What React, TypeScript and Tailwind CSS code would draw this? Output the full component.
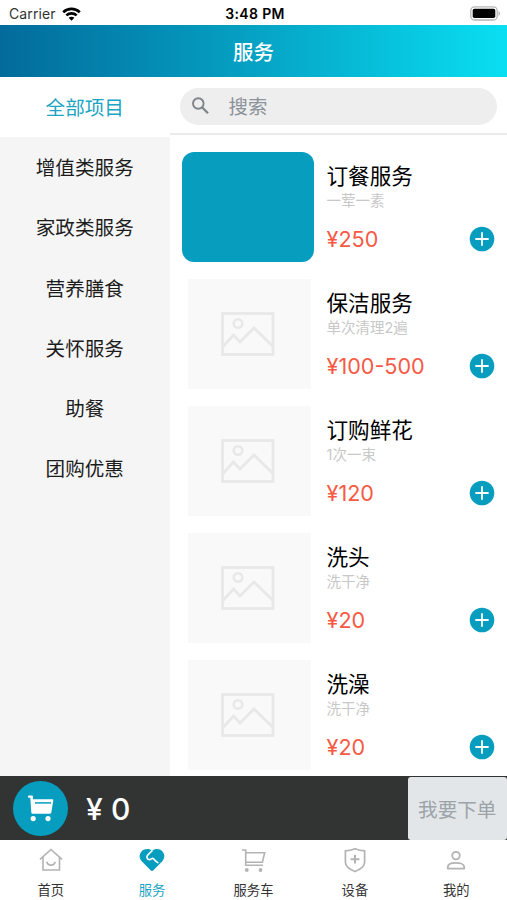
import { ReactNode } from "react";

interface IService {
  name: string;
  desc: string;
  price: string;
  cover?: boolean;
}

interface ITab {
  label: string;
  icon: ReactNode;
  active?: boolean;
}

const categories = [
  "全部项目",
  "增值类服务",
  "家政类服务",
  "营养膳食",
  "关怀服务",
  "助餐",
  "团购优惠",
];

const services: IService[] = [
  { name: "订餐服务", desc: "一荤一素", price: "250", cover: true },
  { name: "保洁服务", desc: "单次清理2遍", price: "100-500" },
  { name: "订购鲜花", desc: "1次一束", price: "120" },
  { name: "洗头", desc: "洗干净", price: "20" },
  { name: "洗澡", desc: "洗干净", price: "20" },
];

const HomeIcon = () => (
  <svg width="26" height="26" viewBox="0 0 26 26" fill="none" stroke="#b3b3b3" strokeWidth="1.6">
    <path d="M2 12.3 13 2.5l11 9.8M5 10v13h16.5V10" />
    <path d="M8.8 14.8c1 4.4 7.4 4.4 8.4 0" />
  </svg>
);

const HeartIcon = () => (
  <svg width="26" height="26" viewBox="0 0 26 26">
    <path
      d="M13.2 3.6C10.5 1.6 5.5 1.3 2.7 4.3C0 7.2 0 11.5 2.7 14.2L11.6 23.3Q13 24.6 14.4 23.3L23.3 14.2C26 11.5 26 7.2 23.3 4.3C20.5 1.3 16 1.6 13.2 3.6Z"
      fill="#069dbf"
    />
    <path
      d="M13.4 3.4 8.8 8C7.2 9.9 8 12.6 10.4 12.6C12.3 12.6 12.6 11 14 11.5C15.4 12 15.8 14.4 19.4 16"
      fill="none"
      stroke="white"
      strokeWidth="1.7"
    />
  </svg>
);

const CartIcon = () => (
  <svg width="28" height="26" viewBox="0 0 28 26" fill="none" stroke="#b3b3b3" strokeWidth="1.6">
    <path d="M3 3h3.700v15.300h17.300M6.700 5.800h19l-2.300 9.400H6.700" />
    <circle cx="7.800" cy="23" r="1.900" fill="#b3b3b3" stroke="none" />
    <circle cx="21.500" cy="23" r="1.900" fill="#b3b3b3" stroke="none" />
  </svg>
);

const ShieldIcon = () => (
  <svg width="26" height="26" viewBox="0 0 26 26" fill="none" stroke="#b3b3b3" strokeWidth="1.7">
    <path d="M13 1.7c3 1.3 6 2 9.600 2.200v11.300c0 4-4.700 7.300-9.600 9.300-4.900-2-9.600-5.300-9.600-9.300V3.900C7 3.700 10 3 13 1.700Z" />
    <path d="M13 7.800v8.800M8.600 12.200h8.800" strokeWidth="2" />
  </svg>
);

const UserIcon = () => (
  <svg width="26" height="26" viewBox="0 0 26 26" fill="none" stroke="#b3b3b3" strokeWidth="1.8">
    <circle cx="13" cy="8.600" r="3.800" />
    <path d="M4.800 21.600v-1.700c0-2.500 3.500-4 8.200-4s8.200 1.500 8.200 4v1.700Z" strokeLinejoin="round" />
  </svg>
);

const tabs: ITab[] = [
  { label: "首页", icon: <HomeIcon /> },
  { label: "服务", icon: <HeartIcon />, active: true },
  { label: "服务车", icon: <CartIcon /> },
  { label: "设备", icon: <ShieldIcon /> },
  { label: "我的", icon: <UserIcon /> },
];

function StatusBar() {
  return (
    <div className="grid h-[25px] shrink-0 grid-cols-3 items-center pt-[2px] pr-1.5 pl-[9px] text-[14px] leading-none">
      <div className="flex items-center gap-1.5 text-[#333]">
        <span className="tracking-[0.1px]">Carrier</span>
        <svg width="19" height="14" viewBox="0 0 19 14" fill="none" stroke="black" strokeWidth="2.6">
          <path d="M1.2 5.2c4.7-4.5 11.9-4.5 16.6 0" />
          <path d="M4.3 8.4c3-2.7 7.4-2.7 10.4 0" />
          <path d="M9.5 13.8 6.6 10.8c1.6-1.5 4.2-1.5 5.8 0Z" fill="black" stroke="none" />
        </svg>
      </div>
      <div className="text-center font-semibold tracking-[0.35px]">3:48 PM</div>
      <svg className="justify-self-end" width="31" height="15" viewBox="0 0 31 15">
        <rect x="0.8" y="0.8" width="26.4" height="13.2" rx="3.8" fill="white" stroke="#b5b5b5" strokeWidth="1.3" />
        <rect x="2.7" y="2.7" width="22.6" height="9.4" rx="1.8" fill="black" />
        <path d="M28.500 5v5c2-.8 2-4.200 0-5Z" fill="#b5b5b5" />
      </svg>
    </div>
  );
}

function ServiceItem({ name, desc, price, cover }: IService) {
  return (
    <div className="flex h-[127px] shrink-0 pt-2 pr-3 pl-3">
      {cover ? (
        <div className="mt-px h-[110px] w-[132.5px] shrink-0 rounded-[12px] bg-[#069dbf]" />
      ) : (
        <div className="mt-px mr-[3.5px] ml-1.5 flex h-[110px] w-[123px] shrink-0 items-center justify-center bg-[#f9f9f9] pr-0.5">
          <svg width="54" height="44" viewBox="0 0 54 44" fill="none" stroke="#e8e8e8" strokeWidth="2.8">
            <rect x="1.5" y="1.5" width="50.5" height="41" />
            <circle cx="17" cy="11.5" r="4.300" strokeWidth="2.5" />
            <path d="M2 34.500 12.500 23l6.500 7L33 16l19 18.500" />
          </svg>
        </div>
      )}
      <div className="ml-[12.5px] min-w-0 flex-1">
        <div className="mt-[11.5px] text-[21.6px] leading-[27px] text-black">{name}</div>
        <div className="text-[14.5px] leading-[22px] text-[#c8c8c8]">{desc}</div>
        <div className="mt-[14px] flex h-[27px] items-center justify-between">
          <span className="pt-0.5 text-[21.6px] leading-none text-[#f65a45]">¥{price}</span>
          <svg width="26" height="26" viewBox="0 0 26 26">
            <circle cx="13" cy="13" r="12.3" fill="#069dbf" />
            <path d="M13 7v12M7 13h12" stroke="white" strokeWidth="1.8" strokeLinecap="round" />
          </svg>
        </div>
      </div>
    </div>
  );
}

export default function App() {
  return (
    <div className="flex h-[900px] w-[507px] flex-col overflow-hidden bg-white font-[Inter,'Noto_Sans_CJK_SC',sans-serif]">
      <StatusBar />
      <header className="flex h-[52px] shrink-0 items-center justify-center bg-linear-to-r from-[#036b9b] via-[#06a2c4] to-[#0adff2] pt-[5px] text-[20.5px] font-medium text-white">
        服务
      </header>

      <main className="flex min-h-0 flex-1">
        <aside className="w-[169.5px] shrink-0 bg-[#f5f5f5]">
          {categories.map((item, index) => (
            <div
              key={item}
              className={`flex h-[60.25px] items-center justify-center pt-[3px] text-[19.6px] ${
                index === 0 ? "bg-white text-[#1ba4c4]" : "text-[#1c1c1c]"
              }`}
            >
              {item}
            </div>
          ))}
        </aside>

        <section className="flex min-w-0 flex-1 flex-col overflow-hidden">
          <div className="h-[58px] shrink-0 border-b-2 border-[#ebebeb] pt-[10.5px] pr-2.5 pl-2.5">
            <div className="flex h-[37px] items-center rounded-full bg-[#eeeeef] pl-3 text-[19.4px] text-[#8b9299]">
              <svg width="18" height="18" viewBox="0 0 18 18" fill="none" stroke="#7f858a" strokeWidth="1.9">
                <circle cx="6.300" cy="6.500" r="5.300" />
                <path d="m10.300 10.500 5.700 5.700" strokeWidth="2.3" />
              </svg>
              <span className="ml-[19px] pt-[3px]">搜索</span>
            </div>
          </div>
          <div className="flex min-h-0 flex-1 flex-col overflow-hidden pt-2">
            {services.map((service) => (
              <ServiceItem key={service.name} {...service} />
            ))}
          </div>
        </section>
      </main>

      {/* Order bar */}
      <div className="flex h-16 shrink-0 items-center bg-[#323433] pl-[13px]">
        <div className="flex size-[55px] items-center justify-center rounded-full bg-[#069dbf]">
          <svg width="26" height="27" viewBox="0 0 26 27" fill="white">
            <path d="M0.8 0.5H3.8Q5 0.5 5 1.8V4.3H24.5Q25.5 4.3 25.3 5.3L23.3 17.5Q23 18.8 21.7 18.8H4.5Q3.4 18.8 3.3 17.6L2.3 2.8H0.8Q0 2.8 0 1.7 0 0.5 0.8 0.5Z" />
            <path d="M7 7.9h16" stroke="#069dbf" strokeWidth="1.5" />
            <circle cx="5.2" cy="23.6" r="2.6" />
            <circle cx="20" cy="23.6" r="2.6" />
          </svg>
        </div>
        <div className="ml-[18px] flex flex-1 gap-1.5 pt-px text-[30px] leading-none font-medium text-white">
          <span className="w-[19px]">¥</span>
          <span>0</span>
        </div>
        <button className="mt-px h-[63px] w-[99.5px] rounded-[3px] bg-[#e2e6e8] pt-1 text-[19.6px] text-[#9ca3a9]">
          我要下单
        </button>
      </div>

      <nav className="grid h-[60px] shrink-0 grid-cols-5">
        {tabs.map((tab) => (
          <div key={tab.label} className="flex flex-col items-center pt-[7px]">
            {tab.icon}
            <span
              className={`mt-[7px] text-[13.3px] leading-5 ${
                tab.active ? "text-[#1ba4c4]" : "text-[#333]"
              }`}
            >
              {tab.label}
            </span>
          </div>
        ))}
      </nav>
    </div>
  );
}
